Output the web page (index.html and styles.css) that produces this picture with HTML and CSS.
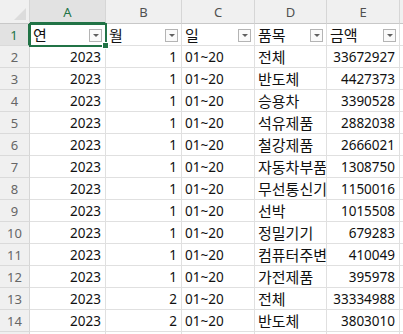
FILE: index.html
```html
<!DOCTYPE html>
<html lang="ko">
<head>
    <meta charset="UTF-8">
    <meta name="viewport" content="width=device-width, initial-scale=1.0">
    <title>Sheet1</title>

    <link rel="stylesheet" href="styles.css">
</head>
<body>
<div class="sheet">
    <!-- column headers -->
    <div class="corner"></div>
    <div class="colhead sel">A</div>
    <div class="colhead">B</div>
    <div class="colhead">C</div>
    <div class="colhead">D</div>
    <div class="colhead">E</div>
    <div class="colhead">F</div>

    <!-- row 1: titles with filter buttons -->
    <div class="rowhead sel">1</div>
    <div class="cell title active">연<span class="filter"></span></div>
    <div class="cell title">월<span class="filter"></span></div>
    <div class="cell title">일<span class="filter"></span></div>
    <div class="cell title">품목<span class="filter"></span></div>
    <div class="cell title">금액<span class="filter"></span></div>
    <div class="cell"></div>

    <div class="rowhead">2</div>
    <div class="cell num">2023</div><div class="cell num">1</div><div class="cell date">01~20</div><div class="cell txt">전체</div><div class="cell num">33672927</div><div class="cell"></div>
    <div class="rowhead">3</div>
    <div class="cell num">2023</div><div class="cell num">1</div><div class="cell date">01~20</div><div class="cell txt">반도체</div><div class="cell num">4427373</div><div class="cell"></div>
    <div class="rowhead">4</div>
    <div class="cell num">2023</div><div class="cell num">1</div><div class="cell date">01~20</div><div class="cell txt">승용차</div><div class="cell num">3390528</div><div class="cell"></div>
    <div class="rowhead">5</div>
    <div class="cell num">2023</div><div class="cell num">1</div><div class="cell date">01~20</div><div class="cell txt">석유제품</div><div class="cell num">2882038</div><div class="cell"></div>
    <div class="rowhead">6</div>
    <div class="cell num">2023</div><div class="cell num">1</div><div class="cell date">01~20</div><div class="cell txt">철강제품</div><div class="cell num">2666021</div><div class="cell"></div>
    <div class="rowhead">7</div>
    <div class="cell num">2023</div><div class="cell num">1</div><div class="cell date">01~20</div><div class="cell txt">자동차부품</div><div class="cell num">1308750</div><div class="cell"></div>
    <div class="rowhead">8</div>
    <div class="cell num">2023</div><div class="cell num">1</div><div class="cell date">01~20</div><div class="cell txt">무선통신기기</div><div class="cell num">1150016</div><div class="cell"></div>
    <div class="rowhead">9</div>
    <div class="cell num">2023</div><div class="cell num">1</div><div class="cell date">01~20</div><div class="cell txt">선박</div><div class="cell num">1015508</div><div class="cell"></div>
    <div class="rowhead">10</div>
    <div class="cell num">2023</div><div class="cell num">1</div><div class="cell date">01~20</div><div class="cell txt">정밀기기</div><div class="cell num">679283</div><div class="cell"></div>
    <div class="rowhead">11</div>
    <div class="cell num">2023</div><div class="cell num">1</div><div class="cell date">01~20</div><div class="cell txt">컴퓨터주변기기</div><div class="cell num">410049</div><div class="cell"></div>
    <div class="rowhead">12</div>
    <div class="cell num">2023</div><div class="cell num">1</div><div class="cell date">01~20</div><div class="cell txt">가전제품</div><div class="cell num">395978</div><div class="cell"></div>
    <div class="rowhead">13</div>
    <div class="cell num">2023</div><div class="cell num">2</div><div class="cell date">01~20</div><div class="cell txt">전체</div><div class="cell num">33334988</div><div class="cell"></div>
    <div class="rowhead">14</div>
    <div class="cell num">2023</div><div class="cell num">2</div><div class="cell date">01~20</div><div class="cell txt">반도체</div><div class="cell num">3803010</div><div class="cell"></div>
    <div class="rowhead">15</div>
    <div class="cell"></div><div class="cell"></div><div class="cell"></div><div class="cell"></div><div class="cell"></div><div class="cell"></div>
</div>
</body>
</html>
```

FILE: styles.css
```css
body {
    margin: 0;
    background-color: #ffffff;
    overflow: hidden;
    font-family: "Noto Sans", "Noto Sans CJK KR", sans-serif;
}

.sheet {
    display: grid;
    grid-template-columns: 30px 76px 76px 73px 72px 73px 80px;
    grid-template-rows: 24px;
    grid-auto-rows: 22px;
    width: 480px;
}

/* headers */
.corner,
.colhead,
.rowhead {
    background-color: #f0f0f0;
    color: #505050;
    font-size: 13px;
    box-sizing: border-box;
    border-right: 1px solid #d6d6d6;
    border-bottom: 1px solid #c8c8c8;
}

.corner {
    position: relative;
}

.corner::after {
    content: "";
    position: absolute;
    right: 3px;
    bottom: 3px;
    width: 12px;
    height: 12px;
    background-color: #dcdcdc;
    clip-path: polygon(100% 0, 100% 100%, 0 100%);
}

.colhead {
    display: flex;
    align-items: center;
    justify-content: center;
    padding-top: 1px;
}

.rowhead {
    display: flex;
    align-items: center;
    justify-content: center;
    color: #666;
    border-bottom-color: #dadada;
}

.colhead.sel {
    background-color: #e2e2e2;
    color: #217346;
    border-bottom: 2px solid #217346;
}

.rowhead.sel {
    background-color: #e2e2e2;
    color: #217346;
    border-right: 2px solid #217346;
}

/* cells */
.cell {
    box-sizing: border-box;
    border-right: 1px solid #e0e0e0;
    border-bottom: 1px solid #e0e0e0;
    color: #111;
    white-space: nowrap;
    overflow: hidden;
    padding: 0 3px;
    line-height: 21px;
}

.num {
    text-align: right;
    font-size: 13.5px;
    padding-top: 2px;
    padding-right: 4px;
    line-height: 19px;
}

.date {
    font-size: 13.5px;
    padding-top: 2px;
    line-height: 19px;
}

.txt,
.title {
    font-family: "Noto Sans CJK KR", sans-serif;
    font-size: 15px;
}

.title {
    display: flex;
    align-items: center;
    justify-content: space-between;
    padding-right: 3px;
}

.filter {
    position: relative;
    width: 13px;
    height: 13px;
    box-sizing: border-box;
    border: 1px solid #b4b4b4;
    background-color: #fafafa;
    margin-top: 1px;
}

.filter::after {
    content: "";
    position: absolute;
    left: 3px;
    top: 4px;
    border-left: 3px solid transparent;
    border-right: 3px solid transparent;
    border-top: 3px solid #606060;
}

.active {
    position: relative;
    overflow: visible;
    outline: 2px solid #217346;
    outline-offset: -1px;
    z-index: 1;
}

.active::after {
    content: "";
    position: absolute;
    right: -4px;
    bottom: -4px;
    width: 5px;
    height: 5px;
    background-color: #217346;
    border: 1px solid #ffffff;
}
```
